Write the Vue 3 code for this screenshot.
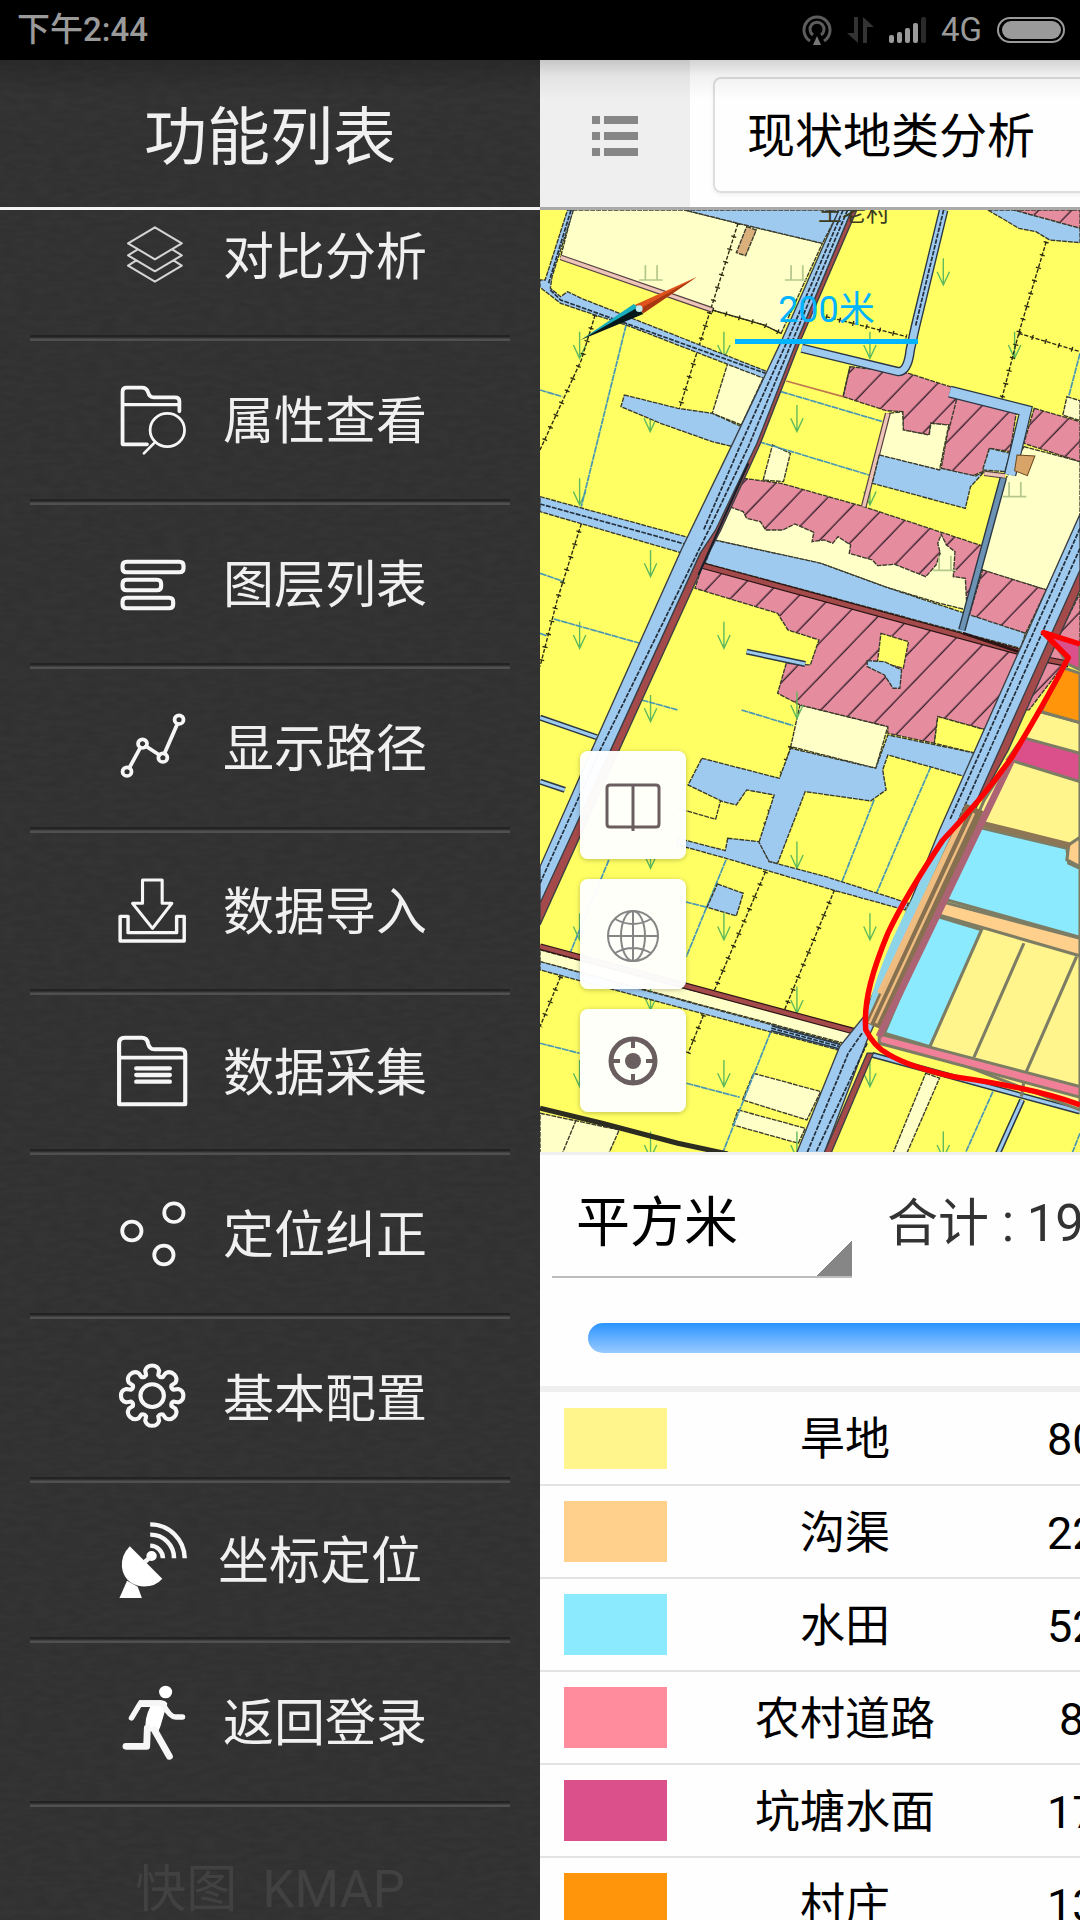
<script setup>
import { ref } from 'vue'

const ring = (x, y, r) => `M${x - r} ${y}a${r} ${r} 0 1 0 ${2 * r} 0a${r} ${r} 0 1 0 ${-2 * r} 0Z`
const pill = (x1, y1, x2, y2) => {
  const r = 12
  return `M${x1 + r} ${y1}H${x2 - r}Q${x2} ${y1} ${x2} ${y1 + r}V${y2 - r}Q${x2} ${y2} ${x2 - r} ${y2}H${x1 + r}Q${x1} ${y2} ${x1} ${y2 - r}V${y1 + r}Q${x1} ${y1} ${x1 + r} ${y1}Z`
}

// Eight-lobed gear outline around a centre point
const gear = (cx, cy) => {
  const at = (r, deg) => {
    const a = (deg * Math.PI) / 180
    return `${(cx + r * Math.sin(a)).toFixed(1)} ${(cy - r * Math.cos(a)).toFixed(1)}`
  }
  let d = ''
  for (let k = 0; k < 8; k++) {
    const t = k * 45
    d += `${k ? 'A12 12 0 0 0 ' : 'M'}${at(64, t - 16)}L${at(78, t - 15)}A21 21 0 0 1 ${at(78, t + 15)}L${at(64, t + 16)}`
  }
  return d + `A12 12 0 0 0 ${at(64, -16)}Z`
}

const menu = [
  { label: '对比分析', box: '337 647 209 240', tone: 'soft', lines: [
    { w: 6, d: 'M450 681L528 729L450 777L372 729ZM400 747L372 765L450 813L528 765L500 747M396 780L372 796L450 844L528 796L504 780' },
  ] },
  { label: '属性查看', box: '337 120 209 240', lines: [
    { w: 11, d: 'M427 313H356V155Q356 143 368 143H412Q426 143 430 157Q434 172 446 172H508Q521 172 521 184V214' },
    { w: 10, d: 'M358 194H521' },
    { w: 8, d: 'M449 308L418 340' + ring(486, 270, 50) },
  ] },
  { label: '图层列表', box: '337 612 209 240', lines: [
    { w: 12, d: pill(356, 665, 533, 697) + pill(356, 719, 468, 751) + pill(356, 773, 503, 805) },
  ] },
  { label: '显示路径', box: '337 25 209 240', lines: [
    { w: 11, d: ring(520, 60, 13) + ring(414, 132, 13) + ring(473, 174, 13) + ring(369, 216, 13) },
    { w: 11, d: 'M376 204L407 145M424 140L463 166M478 161L515 73' },
  ] },
  { label: '数据导入', box: '337 513 209 240', size: 'mid', lines: [
    { w: 9, d: 'M414 540H471V610H499L443 685L385 610H414Z' },
    { w: 10, d: 'M349 649H372V698H513V649H535V723H349Z' },
  ] },
  { label: '数据采集', box: '337 996 209 240', size: 'low', lines: [
    { w: 12, d: 'M346 1213V1030Q346 1013 362 1013H412Q427 1013 430 1030Q434 1048 448 1048H524Q538 1048 538 1062V1213Z' },
    { w: 11, d: 'M350 1073H536' },
    { w: 13, d: 'M396 1105H493M396 1125H493M396 1145H493' },
  ] },
  { label: '定位纠正', box: '337 162 209 240', lines: [
    { w: 11, d: ring(505, 218, 28) + ring(383, 273, 28) + ring(476, 345, 28) },
  ] },
  { label: '基本配置', box: '337 654 209 240', lines: [
    { w: 12, d: gear(442, 767) + ring(442, 767, 34) },
  ] },
  { label: '坐标定位', box: '337 60 194 240', size: 'low narrow', lines: [
    { w: 0, d: 'M377 139Q352 165 354 200Q360 250 410 259Q450 262 471 236ZM369 242L400 260L412 294H347Z' + ring(440, 168, 15) },
    { w: 13, d: 'M436 137A38 38 0 0 1 473 175M436 104A68 70 0 0 1 505 175M436 73A100 104 0 0 1 536 175M420 186L436 172', flat: true },
  ] },
  { label: '返回登录', box: '337 547 209 240', lines: [
    { w: 0, d: ring(481, 577, 19) + 'M404 602H466Q480 602 486 612L478 638L466 680L458 700L424 690Q418 660 436 622H404Z' },
    { w: 16, d: 'M382 655L408 610H465M474 615Q494 652 510 652H530' },
    { w: 20, d: 'M448 690L492 770M428 685L426 740H366' },
  ] },
]

const arrows = [
  [1171, 175], [115, 395], [534, 395], [958, 395], [1378, 395], [320, 615], [746, 615], [115, 835], [958, 835],
  [321, 1050], [115, 1265], [534, 1265], [321, 1485], [746, 1475], [321, 1925], [746, 1925], [115, 2140],
  [534, 2140], [958, 2140], [321, 2350], [746, 2360], [115, 2580], [534, 2580], [958, 2580], [321, 2795],
  [746, 2795], [1171, 2795],
]
const grass = [[322, 240], [745, 240], [1378, 890], [1175, 1111]]

const creams = [
  '95,30 420,30 575,70 820,130 700,400 650,375 500,330 60,170',
  '545,490 650,530 585,675 500,640',
  '675,735 727,760 707,845 648,840',
  '1405,740 1568,785 1568,960 1470,1170 1280,1110 1345,850',
  '755,1515 1010,1580 975,1705 728,1640',
  '0,2250 915,2500 900,2535 0,2285',
  '620,2620 815,2675 775,2760 588,2700',
  '575,2730 770,2785 750,2830 560,2775',
  '0,2740 230,2790 200,2860 0,2860',
  '1120,2620 1160,2635 1065,2860 1025,2860',
  '1530,590 1568,602 1568,662 1518,645',
]
const pinks = [
  '900,500 1070,520 1190,560 1385,625 1365,755 1305,745 1285,815 1255,828 1165,805 1187,675 1135,670 1130,705 1055,690 1053,635 1005,632 880,590',
  '1435,625 1568,665 1568,785 1405,730',
  '1375,30 1568,30 1568,85',
  '780,30 865,30 860,50',
  '590,835 700,850 940,920 1285,1038 1240,1230 1000,1160 505,1020 550,915',
  '1285,1110 1470,1170 1410,1300 1245,1250',
  '470,1100 1390,1360 1295,1590 1155,1550 1145,1630 1010,1600 1010,1580 755,1515 690,1480 715,1390 785,1395 810,1320 720,1290 690,1240 450,1165',
  '1568,1180 1568,1330 1420,1530 1400,1530 1480,1360',
]
const innerCreams = [
  '1015,640 1053,635 1055,690 1130,705 1135,670 1187,675 1160,810 980,765',
  '550,920 590,935 600,955 640,965 655,990 705,990 740,972 795,997 790,1025 825,1020 850,1030 865,1010 902,1035 898,1060 965,1080 980,1097 1030,1093 1120,1130 1150,1095 1162,1060 1155,1030 1165,1003 1180,1035 1205,1055 1200,1130 1235,1135 1240,1230 1160,1210 1000,1160 815,1090 505,1020',
]
const innerYellows = ['990,1300 1070,1325 1055,1405 980,1385', '1155,1550 1295,1590 1265,1660 1145,1630']
const waters = [
  '420,30 870,30 820,130 575,70',
  '80,30 97,30 35,230 30,265 60,290 80,275 120,295 660,515 650,535 250,375 160,345 60,310 0,262 0,240 15,240',
  '245,585 400,625 500,640 585,680 560,740 500,725 350,670 235,620',
  '1300,30 1375,30 1568,85 1568,128 1480,120 1440,95 1390,85 1350,60',
  '1305,745 1365,760 1350,815 1285,810',
  '985,765 1160,810 1165,805 1265,828 1290,815 1250,860 1235,925 965,850',
  '0,890 440,1015 415,1060 0,935',
  '505,1020 815,1090 1000,1160 1410,1300 1395,1345 480,1090',
  '950,1382 1000,1385 1050,1410 1045,1465 1025,1465 1000,1425 950,1400',
  '470,1675 695,1735 728,1645 975,1705 1010,1605 1265,1660 1235,1730 1010,1665 995,1710 1005,1770 960,1803 770,1775 690,1990 665,1985 635,1930 680,1785 600,1770 570,1815 530,1805 430,1755',
  '545,1915 635,1925 665,1985 830,2030 1070,2110 1060,2130 850,2070 540,1975 400,1935 400,1915 538,1952',
  '515,2052 590,2080 570,2148 485,2122',
  '0,2285 870,2530 865,2550 0,2310',
]
const ticked = [
  'M575 70L455 460L405 625', 'M160 345L120 480L0 750', 'M500 330L650 375L700 400', 'M830 350L1065 410',
  'M1470 125L1390 400L1340 600', 'M1390 400L1568 455', 'M125 955L50 1200L0 1400', 'M655 2015L505 2375',
  'M855 2070L710 2430', 'M60 2330L0 2480', 'M475 2445L430 2560', 'M728 1640L650 1890',
]
const ditches = `M250 375L120 920M0 570L65 590M700 575L995 665M635 725L955 825M0 1120L70 1145M40 1257L290 1330M0 1300L20 1308
M295 1500L400 1530M585 1530L735 1577M1135 1700L1055 1890L975 2085M970 1800L875 2050M540 1980L425 2270M400 2100L485 2122
M200 1980L85 2265M670 2495L530 2860M0 2530L115 2560M425 2650L580 2692M1315 2675L1235 2860M1568 2800L1545 2860M1568 460L1535 590`

const rows = [
  { name: '旱地', color: '#fff58c', value: '80' },
  { name: '沟渠', color: '#ffcf8c', value: '22' },
  { name: '水田', color: '#8ceaff', value: '52' },
  { name: '农村道路', color: '#ff8c9c', value: '8', short: true },
  { name: '坑塘水面', color: '#db4f8a', value: '17' },
  { name: '村庄', color: '#ff950a', value: '13' },
]

const analysis = ref('现状地类分析')
const unit = ref('平方米')
</script>

<template>
  <div class="screen">
    <header class="status">
      <span class="clock">下午2:44</span>
      <div class="signals">
        <svg width="30" height="30" viewBox="0 0 30 30" fill="none" stroke="#5c5c5c" stroke-width="3">
          <path d="M8 26A13 13 0 1 1 22 26" /><path d="M11 20A7 7 0 1 1 19 20" />
          <path d="M15 21L19 30H11Z" fill="#777" stroke="none" />
        </svg>
        <svg width="27" height="28" viewBox="0 0 27 28" fill="#333">
          <path d="M7 1H11V27L0 17H7ZM16 27H20V11H27L16 1Z" />
        </svg>
        <svg class="bars" width="37" height="28" viewBox="0 0 37 28" fill="#9a9a9a">
          <rect x="0" y="19" width="5" height="8" rx="2" /><rect x="8" y="16" width="5" height="11" rx="2" />
          <rect x="16" y="12" width="5" height="15" rx="2" /><rect x="24" y="7" width="5" height="20" rx="2" />
          <rect x="32" y="1" width="5" height="26" rx="2" fill="#2a2a2a" />
        </svg>
        <span class="network">4G</span>
        <svg width="68" height="26" viewBox="0 0 68 26">
          <rect x="1" y="1" width="66" height="24" rx="12" fill="none" stroke="#9a9a9a" stroke-width="2" />
          <rect x="5" y="4" width="59" height="18" rx="9" fill="#9a9a9a" />
        </svg>
      </div>
    </header>

    <div class="body">
      <aside class="drawer">
        <svg class="grain" width="100%" height="100%">
          <filter id="grain" x="0" y="0" width="100%" height="100%">
            <feTurbulence type="fractalNoise" baseFrequency="0.06 0.18" numOctaves="3" seed="4" />
            <feColorMatrix values="0 0 0 0 0  0 0 0 0 0  0 0 0 0 0  0.5 0 0 0 -0.17" />
          </filter>
          <rect width="100%" height="100%" filter="url(#grain)" opacity="0.3" />
        </svg>
        <h1 class="drawer-title">功能列表</h1>
        <nav class="drawer-nav">
          <ul class="menu">
            <li v-for="item in menu" :key="item.label">
              <button type="button" class="entry" :class="item.size">
                <svg class="glyph" :class="item.tone" :viewBox="item.box" preserveAspectRatio="none">
                  <path
                    v-for="(l, i) in item.lines" :key="i" :d="l.d" :stroke-width="l.w"
                    :class="{ solid: !l.w, flat: l.flat }"
                  />
                </svg>
                <span class="entry-label">{{ item.label }}</span>
              </button>
            </li>
          </ul>
          <p class="brand">快图&nbsp; KMAP</p>
        </nav>
      </aside>

      <main class="page">
        <div class="toolbar">
          <button type="button" class="toggle" aria-label="菜单">
            <svg width="46" height="40" viewBox="0 0 46 40" fill="#868686">
              <path d="M0 0H8V8H0ZM12 0H46V8H12ZM0 16H8V24H0ZM12 16H46V24H12ZM0 32H8V40H0ZM12 32H46V40H12Z" />
            </svg>
          </button>
          <select v-model="analysis" class="analysis" aria-label="分析类型">
            <option>现状地类分析</option>
          </select>
        </div>

        <section class="map">
          <svg class="canvas" viewBox="0 0 540 942" preserveAspectRatio="xMinYMin meet">
            <defs>
              <pattern id="hatch" width="70" height="70" patternUnits="userSpaceOnUse" patternTransform="rotate(43)">
                <rect width="70" height="70" fill="#e68c9f" /><path d="M30 0V70" stroke="#33202a" stroke-width="4" />
              </pattern>
              <clipPath id="extent"><rect width="540" height="942" /></clipPath>
            </defs>
            <g clip-path="url(#extent)">
              <g transform="scale(0.3444 0.3333) translate(0 -30)">
                <rect y="30" width="1568" height="2830" fill="#ffff64" />
                <g class="parcel">
                  <polygon v-for="p in creams" :key="p" :points="p" fill="#ffffc8" />
                  <polygon v-for="p in pinks" :key="p" :points="p" fill="url(#hatch)" />
                  <polygon v-for="p in innerCreams" :key="p" :points="p" fill="#ffffc8" />
                  <polygon v-for="p in innerYellows" :key="p" :points="p" fill="#ffff64" />
                  <polygon points="600,80 628,90 597,167 570,158" fill="#d9b07c" />
                  <path d="M430 1755L530 1780L510 1858L400 1825" fill="none" />
                  <path d="M880 590L900 500M1218 565L1187 690M105 2760L65 2860" fill="none" />
                </g>
                <g class="marks">
                  <path v-for="[x, y] in arrows" :key="x + '-' + y" :d="`M${x} ${y}v80M${x - 18} ${y + 40}l18 40l18 -40`" />
                </g>
                <path class="grass" v-for="[x, y] in grass" :key="x" :d="`M${x - 34} ${y}h68M${x - 16} ${y}v-44M${x + 18} ${y}v-44`" />
                <path class="ditch" :d="ditches" />
                <g v-for="d in ticked" :key="d" fill="none" stroke="#2a2a10">
                  <path :d="d" stroke-width="4" stroke-dasharray="12 5" />
                  <path :d="d" stroke-width="15" stroke-dasharray="4 36" />
                </g>
                <path d="M715 543L880 590" stroke="#c07850" stroke-width="5" />

                <g fill="none">
                  <path d="M60 172L500 330M1010 640L940 920M1290 820L1350 828" stroke="#554040" stroke-width="17" />
                  <path d="M60 172L500 330M1010 640L940 920M1290 820L1350 828" stroke="#eec4b8" stroke-width="10" />
                </g>
                <g class="parcel">
                  <polygon v-for="p in waters" :key="p" :points="p" fill="#9ecaf0" />
                </g>
                <g fill="none">
                  <g stroke="#2a3744">
                    <path d="M1172 30L1090 380L1075 450Q1068 515 1040 515L760 445" stroke-width="28" />
                    <path d="M1190 575L1410 632L1365 825" stroke-width="36" />
                    <path d="M1345 835L1225 1290" stroke-width="22" />
                    <path d="M600 1355L770 1392M0 1553L165 1612M0 1745L72 1770M965 2565L1568 2735M1400 2700L1330 2860M672 2485L870 2540" stroke-width="18" />
                  </g>
                  <g stroke="#9ecaf0">
                    <path d="M1172 30L1090 380L1075 450Q1068 515 1040 515L760 445" stroke-width="20" />
                    <path d="M1190 575L1410 632L1365 825" stroke-width="29" />
                    <path d="M1345 835L1225 1290" stroke="#6c93b4" stroke-width="14" />
                    <path d="M600 1355L770 1392M0 1553L165 1612M0 1745L72 1770M965 2565L1568 2735M1400 2700L1330 2860M672 2485L870 2540" stroke-width="9" />
                  </g>
                  <path class="seam" d="M1172 30L1090 380M30 270L60 300L655 520M0 912L430 1035M672 2485L870 2540M90 30L25 250" />
                  <path d="M0 2725L180 2770L400 2830L545 2862" stroke="#2c2c20" stroke-width="15" />
                  <path d="M472 1097L1392 1356M0 2240L915 2495M1475 1380L1535 1392" stroke="#2b1414" stroke-width="20" />
                  <path d="M472 1097L1392 1356M0 2240L915 2495M1475 1380L1535 1392" stroke="#a54a4a" stroke-width="13" />
                  <path d="M1228 1300L1392 1356" stroke="#2b1414" stroke-width="8" />
                </g>

                <polygon points="1385,765 1437,768 1415,827 1378,812" fill="#d9a468" stroke="#6b4a20" stroke-width="3" />

                <g class="road">
                  <polygon fill="#a54a4a" points="905,30 920,30 755,425 640,730 525,990 490,1060 230,1650 0,2175 0,2105 205,1650 465,1060 745,425" />
                  <polygon fill="#9ecaf0" points="868,30 905,30 745,425 630,730 510,990 465,1060 205,1650 0,2110 0,2000 150,1650 410,1050 555,740 700,425" />
                  <polygon fill="#a54a4a" points="1568,1100 1568,1170 1360,1650 1230,1890 1230,1880" />
                  <polygon fill="#9ecaf0" points="1568,942 1568,1110 1230,1890 950,2520 825,2860 745,2860 870,2540 940,2450 1160,1890" />
                  <polygon fill="#a54a4a" points="968,2560 950,2560 825,2860 845,2860" />
                </g>
                <path class="seam" d="M880 30L715 430L580 740L475 990M893 30L730 430L605 740L490 990L175 1650L0 2050M1568 985L1190 1860M1568 1045L1215 1860M935 2500L895 2560L775 2860M950 2530L800 2860" />
                <path d="M635 790L490 1125" fill="none" stroke="#16202c" stroke-width="6" transform="translate(-30 0)" />

                <g stroke="#7c7d64" stroke-width="9">
                  <polygon fill="#fff58c" points="1450,1535 1568,1568 1568,2730 990,2500 1290,1800" />
                  <polygon fill="#db4f8a" points="1480,1305 1568,1332 1568,1410 1532,1392" />
                  <polygon fill="#ff950a" points="1515,1402 1568,1420 1568,1568 1455,1535" />
                  <polygon fill="#db4f8a" points="1402,1613 1568,1660 1568,1745 1358,1678" />
                  <polygon fill="#8ceaff" points="1265,1880 1530,1945 1535,1990 1568,2005 1568,2212 1172,2097" />
                  <polygon fill="#ffcf8c" points="1568,1912 1535,1935 1530,1980 1568,2000" />
                  <polygon fill="#ffcf8c" points="1165,2105 1568,2215 1568,2268 1148,2142" />
                  <polygon fill="#8ceaff" points="1145,2147 1282,2190 1132,2540 1000,2500" />
                  <path d="M1270 1868L1540 1937" stroke="#8d7656" stroke-width="18" />
                  <path d="M1405 2230L1260 2572M1558 2270L1408 2625L1398 2690" fill="none" />
                  <polygon fill="#f08098" points="985,2502 1568,2660 1568,2692 985,2530" />
                </g>
                <g fill="none">
                  <path d="M1215 1880Q1010 2220 962 2440" stroke="#8ed4e8" stroke-width="24" />
                  <path d="M1262 1822L972 2480" stroke="#86704f" stroke-width="58" />
                  <path d="M1238 1840L956 2470M1260 1840L976 2470" stroke="#f0bd80" stroke-width="7" />
                  <path d="M1215 1880L985 2380" stroke="#f0bd80" stroke-width="14" />
                  <path d="M1370 1680L984 2510" stroke="#ac6474" stroke-width="20" />
                  <path
                    d="M1568 1332L1462 1298L1534 1373Q1460 1520 1370 1672Q1290 1790 1170 1920Q1060 2090 1010 2200C970 2300 938 2400 946 2490Q970 2540 1010 2562Q1070 2600 1200 2630Q1440 2665 1568 2715"
                    stroke="#ff0000" stroke-width="16" stroke-linejoin="round"
                  />
                </g>

                <polygon points="455,231 275,315 300,340" fill="#e0521c" />
                <polygon points="455,231 290,326 300,340" fill="#a83812" />
                <polygon points="118,420 272,312 290,325" fill="#19aebc" />
                <polygon points="118,420 285,322 300,342" fill="#06171a" />
                <circle cx="288" cy="326" r="10" fill="#bfeaf0" />
              </g>
              <text class="village" x="278" y="11">王老村</text>
            </g>
          </svg>
          <div class="scale">200米</div>
          <div class="tools">
            <button type="button" class="tool" aria-label="图例">
              <svg width="56" height="50" viewBox="0 0 56 50" fill="none" stroke="#6b5e60" stroke-width="3">
                <path d="M28 3H5Q2 3 2 6V42Q2 45 5 45H51Q54 45 54 42V6Q54 3 51 3H28V49" />
              </svg>
            </button>
            <button type="button" class="tool tall" aria-label="底图">
              <svg width="54" height="54" viewBox="0 0 54 54" fill="none" stroke="#858585" stroke-width="2">
                <circle cx="27" cy="27" r="25" /><ellipse cx="27" cy="27" rx="12" ry="25" />
                <path d="M27 2V52M2 27H52M9 10Q27 20 45 10M9 44Q27 34 45 44" />
              </svg>
            </button>
            <button type="button" class="tool short" aria-label="定位">
              <svg width="50" height="50" viewBox="0 0 50 50" fill="none" stroke="#6b5e60" stroke-width="5">
                <circle cx="25" cy="25" r="22" /><circle cx="25" cy="25" r="8" fill="#6b5e60" stroke="none" />
                <path d="M25 3V12M25 38V47M3 25H12M38 25H47" stroke-width="4" />
              </svg>
            </button>
          </div>
        </section>

        <section class="summary">
          <div class="totals">
            <select v-model="unit" class="unit" aria-label="单位">
              <option>平方米</option>
            </select>
            <span class="sum">合计 : 19</span>
          </div>
          <div class="meter"></div>
        </section>

        <table class="legend">
          <colgroup><col class="c-swatch" /><col class="c-name" /><col /></colgroup>
          <tbody>
            <tr v-for="r in rows" :key="r.name">
              <td><div class="swatch" :style="{ background: r.color }"></div></td>
              <td class="name">{{ r.name }}</td>
              <td class="value" :class="{ less: r.short }">{{ r.value }}</td>
            </tr>
          </tbody>
        </table>
      </main>
    </div>
  </div>
</template>

<style>
body { margin: 0; background: #fff; }
</style>

<style scoped>
.screen {
  display: flex;
  flex-direction: column;
  height: 100vh;
  overflow: hidden;
  font-family: Roboto, "Noto Sans CJK SC", sans-serif;
  color: #000;
}
button, select { font: inherit; color: inherit; border: 0; padding: 0; margin: 0; border-radius: 0; appearance: none; }

.status {
  flex: none;
  display: flex;
  align-items: center;
  justify-content: space-between;
  height: 60px;
  padding: 0 15px 0 17px;
  background: #000;
  color: #9a9a9a;
  font-size: 33px;
  font-weight: 500;
  line-height: 60px;
}
.signals { display: flex; align-items: center; gap: 15px; }
.network { font-weight: 400; }

.body { flex: 1; min-height: 0; display: flex; overflow: hidden; }

.drawer {
  position: relative;
  flex: none;
  display: flex;
  flex-direction: column;
  width: 50%;
  overflow: hidden;
  background: #343434;
  color: #f0f0f0;
}
.grain { position: absolute; inset: 0; }
.drawer-title {
  position: relative;
  flex: none;
  box-sizing: border-box;
  margin: 0;
  height: 150px;
  padding-top: 4px;
  border-bottom: 3px solid #f4f4f4;
  background: linear-gradient(rgba(0, 0, 0, 0.18), transparent 36px);
  font-size: 63px;
  font-weight: 400;
  line-height: 147px;
  text-align: center;
}
.drawer-nav { position: relative; flex: 1; min-height: 0; overflow: hidden; }
.menu { list-style: none; margin: -33px 30px 0; padding: 0; }
.menu li::after {
  content: "";
  display: block;
  height: 6px;
  background: linear-gradient(#232323 0 2px, #303030 2px 3px, #434142 3px 4px, #514f50 4px);
}
.entry {
  display: flex;
  align-items: center;
  gap: 35px;
  width: 100%;
  height: 158px;
  padding-left: 86px;
  background: none;
  font-size: 51px;
  line-height: 60px;
}
.entry.mid { height: 156px; }
.entry.low { height: 154px; }
.entry-label { padding-top: 4px; }
.glyph {
  flex: none;
  width: 72px;
  height: 80px;
  overflow: visible;
  fill: none;
  stroke: #f6f6f6;
  stroke-linecap: round;
  stroke-linejoin: round;
}
.narrow .glyph { width: 67px; }
.glyph.soft { stroke: #d4d4d4; }
.solid { fill: #fff; stroke: none; }
.flat { stroke-linecap: butt; }
.brand { margin: 0; padding-top: 2px; font-size: 51px; line-height: 162px; text-align: center; color: #414141; }

.page { flex: none; width: 100%; background: #fefefe; }
.toolbar {
  position: relative;
  display: flex;
  align-items: center;
  height: 147px;
  border-bottom: 3px solid #aaa;
}
.toolbar::before {
  content: "";
  position: absolute;
  inset: 0 0 auto;
  height: 40px;
  background: linear-gradient(rgba(0, 0, 0, 0.17), rgba(0, 0, 0, 0.05) 16px, transparent);
  pointer-events: none;
}
.toggle {
  display: flex;
  align-items: center;
  justify-content: center;
  width: 150px;
  height: 100%;
  padding-top: 4px;
  background: #efefef;
}
.analysis {
  flex: 1;
  height: 116px;
  margin: 2px 23px 0;
  padding: 4px 32px 0;
  border: 2px solid #dedede;
  border-radius: 8px;
  box-shadow: 0 2px 4px rgba(0, 0, 0, 0.06);
  background: transparent;
  font-size: 48px;
}

.map { position: relative; height: 942px; overflow: hidden; border-bottom: 3px solid #efefef; }
.canvas { display: block; height: 100%; }
.parcel > * { stroke: #3a3a2c; stroke-width: 4; stroke-dasharray: 14 3; }
.road > * { stroke: #3a3f44; stroke-width: 4; }
.marks { fill: none; stroke: #5fb95c; stroke-width: 4; }
.grass { fill: none; stroke: #b4c78c; stroke-width: 5; }
.ditch { fill: none; stroke: #4a97b4; stroke-width: 5; stroke-dasharray: 20 2; }
.seam { fill: none; stroke: #24303c; stroke-width: 5; stroke-dasharray: 14 4; }
.village { font-size: 24px; fill: #3a3a20; }
.scale {
  position: absolute;
  left: 195px;
  top: 75px;
  width: 183px;
  padding-bottom: 3px;
  border-bottom: 5px solid #00b4ff;
  color: #00b4ff;
  font-size: 36px;
  line-height: 51px;
  text-align: center;
}
.tools { position: absolute; left: 40px; bottom: 40px; display: flex; flex-direction: column; gap: 20px; }
.tool {
  display: flex;
  align-items: center;
  justify-content: center;
  width: 106px;
  height: 108px;
  padding-top: 4px;
  border-radius: 8px;
  background: rgba(255, 255, 255, 0.97);
  box-shadow: 0 1px 5px rgba(0, 0, 0, 0.25);
}
.tool.tall { height: 110px; }
.tool.short { height: 103px; padding-top: 0; }

.summary { height: 231px; border-bottom: 6px solid #efefef; }
.totals { display: flex; align-items: center; gap: 35px; padding: 12px 12px 0; }
.unit {
  width: 300px;
  height: 111px;
  padding: 4px 24px 0;
  border-bottom: 2px solid #bdbdbd;
  background: linear-gradient(135deg, transparent 50%, #868686 50%) right bottom / 36px 36px no-repeat;
  font-size: 54px;
}
.sum { padding-top: 2px; font-size: 51px; line-height: 60px; color: #333; }
.meter { height: 30px; margin: 45px 48px 0; border-radius: 15px; background: linear-gradient(#2b94ff, #98caff); }

.legend { width: 100%; border-collapse: collapse; table-layout: fixed; font-size: 45px; line-height: 60px; }
.c-swatch { width: 151px; }
.c-name { width: 308px; }
.legend td { box-sizing: border-box; height: 93px; padding: 0; border-bottom: 2px solid #e3e3e3; }
.swatch { width: 103px; height: 61px; margin-left: 24px; }
.legend .name { padding-top: 4px; text-align: center; }
.legend .value { padding: 4px 0 0 48px; }
.legend .value.less { padding-left: 60px; }
</style>
